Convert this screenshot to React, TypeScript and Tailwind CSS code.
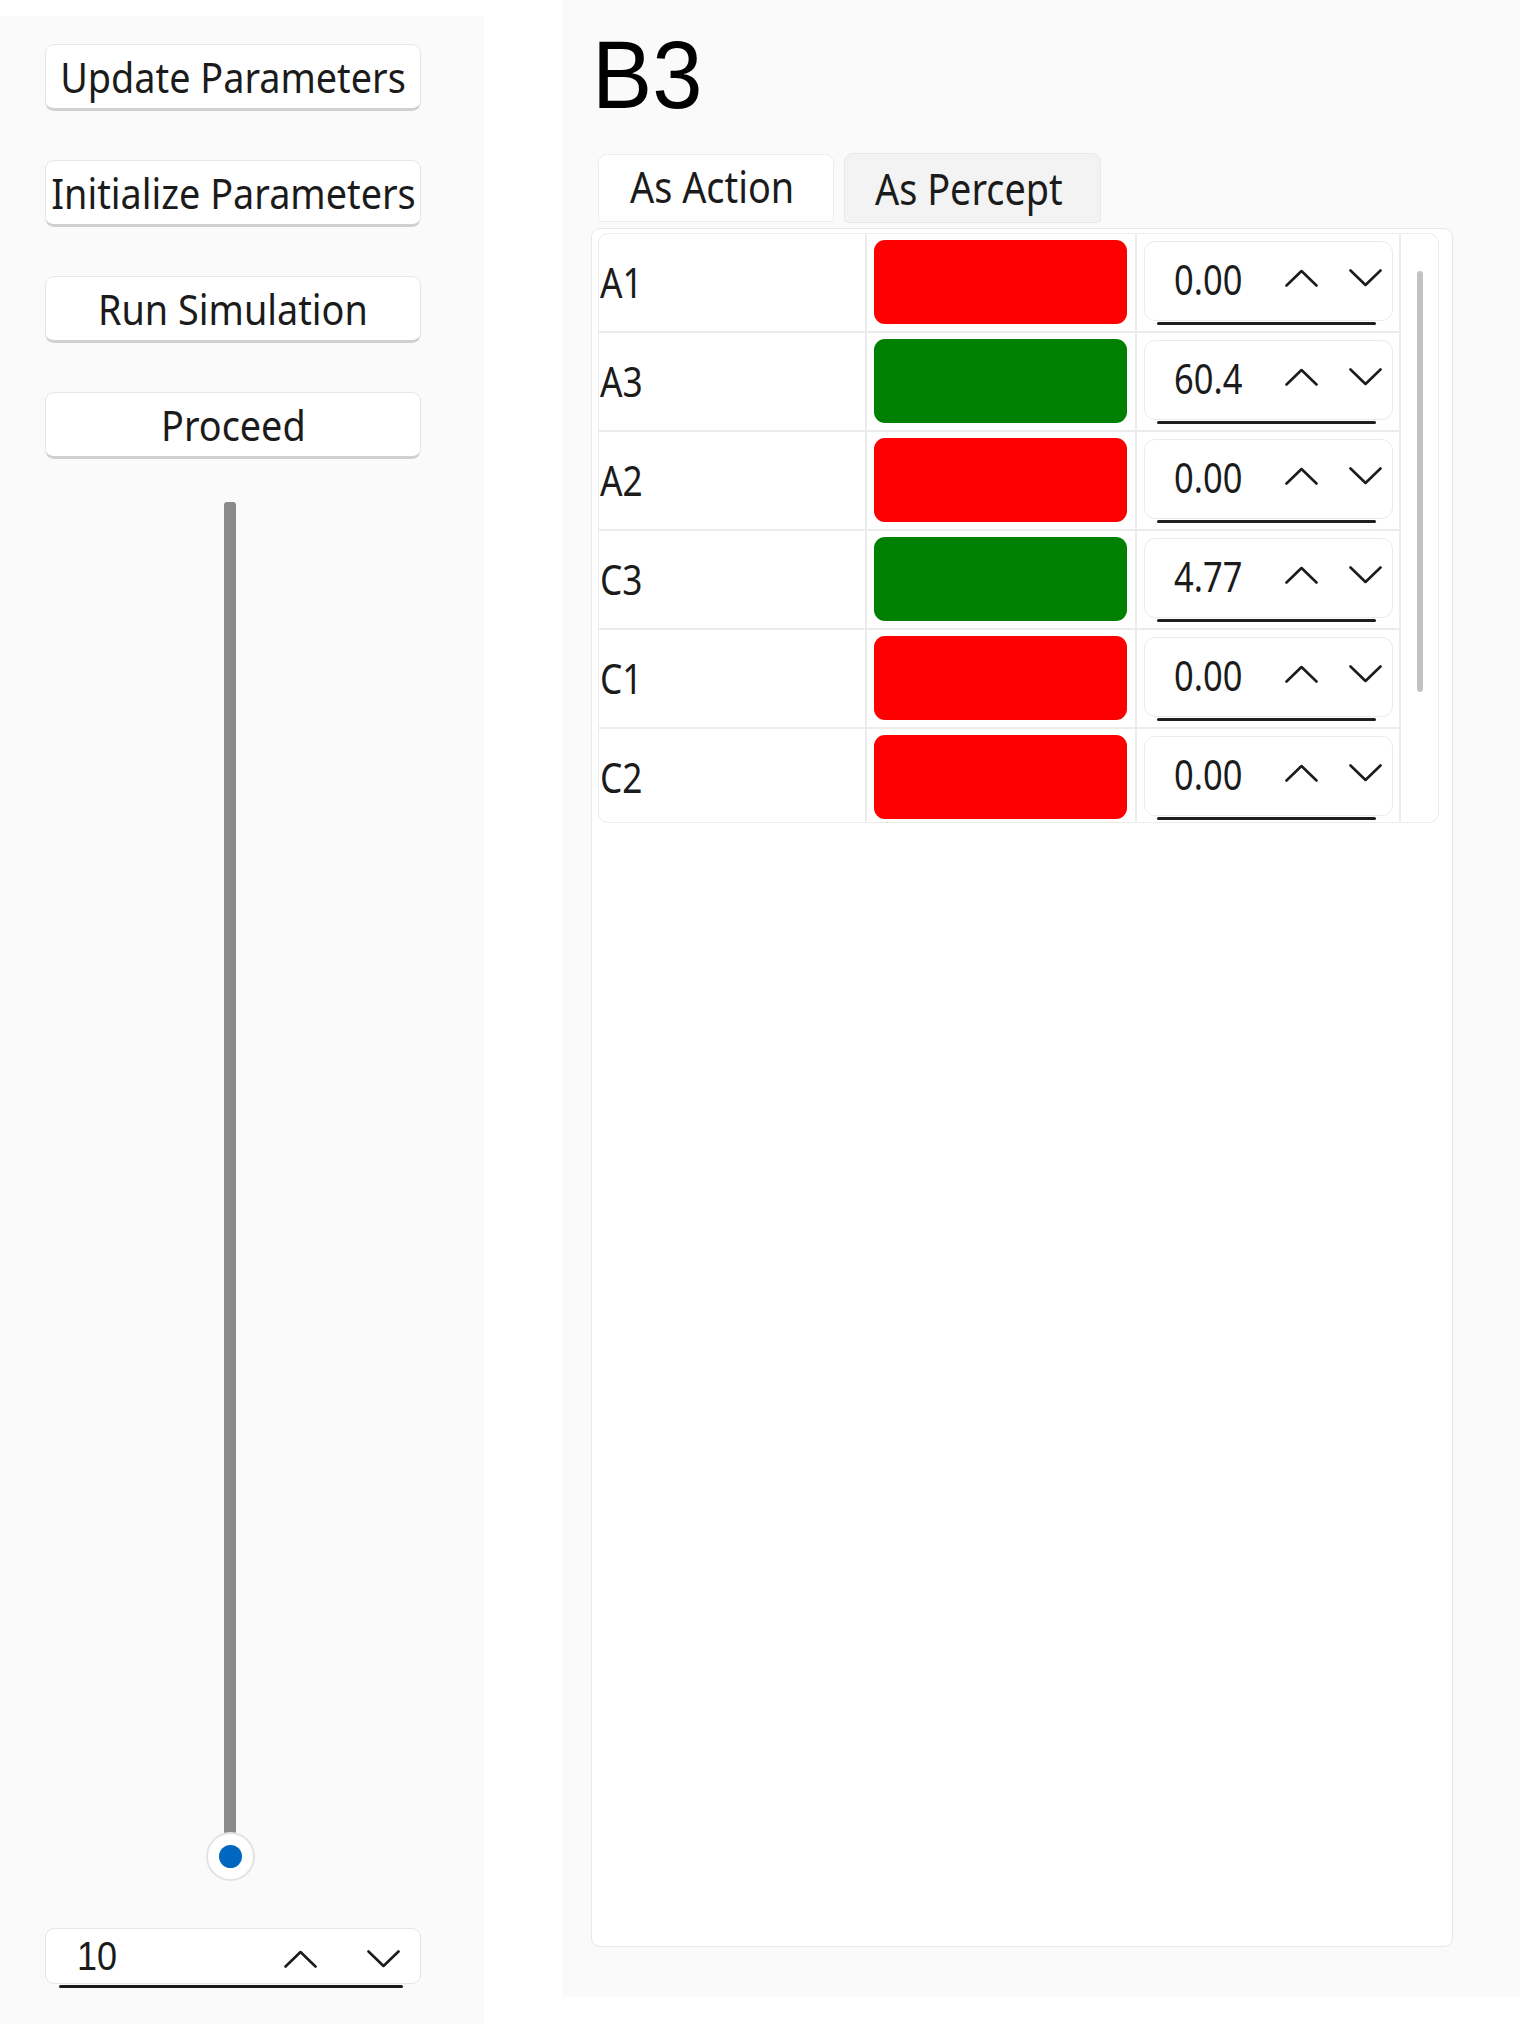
import React from "react";

const rows = [
  { name: "A1", on: false, value: "0.00" },
  { name: "A3", on: true, value: "60.4" },
  { name: "A2", on: false, value: "0.00" },
  { name: "C3", on: true, value: "4.77" },
  { name: "C1", on: false, value: "0.00" },
  { name: "C2", on: false, value: "0.00" },
];

const buttons = ["Update Parameters", "Initialize Parameters", "Run Simulation", "Proceed"];

const ChevronUp: React.FC = () => (
  <svg width="33" height="18" viewBox="0 0 33 18" fill="none">
    <polyline points="1.5,16.5 16.5,2 31.5,16.5" stroke="#1c1c1c" strokeWidth="2.6" strokeLinecap="round" strokeLinejoin="round" />
  </svg>
);

const ChevronDown: React.FC = () => (
  <svg width="33" height="18" viewBox="0 0 33 18" fill="none">
    <polyline points="1.5,1.5 16.5,16 31.5,1.5" stroke="#1c1c1c" strokeWidth="2.6" strokeLinecap="round" strokeLinejoin="round" />
  </svg>
);

const App: React.FC = () => {
  return (
    <div className="w-[1520px] h-[2024px] bg-white flex font-['Noto_Sans',sans-serif] text-[#1b1b1b] overflow-hidden">
      {/* Left control column */}
      <div className="mt-[16px] w-[484px] h-[2008px] bg-[#fafafa] flex flex-col px-[45px] pt-[28px]">
        <div className="flex flex-col gap-[49px] w-[376px]">
          {buttons.map((label) => (
            <button
              key={label}
              className="h-[67px] w-[376px] bg-white rounded-[9px] border border-[#e6e6e6] border-b-[3px] border-b-[#d0d0d0] flex items-center justify-center whitespace-nowrap"
            >
              <span className="inline-block text-[42px] leading-none scale-x-90">{label}</span>
            </button>
          ))}
        </div>

        {/* Vertical slider */}
        <div className="w-[376px] flex flex-col items-center mt-[43px] pr-[6px]">
          <div className="w-[12px] h-[1332px] bg-[#8a8a8a] rounded-t-[3px]" />
          <div className="-mt-[2px] w-[49px] h-[49px] rounded-full bg-white border-2 border-[#e3e3e3] flex items-center justify-center">
            <div className="w-[23px] h-[23px] rounded-full bg-[#0067c0]" />
          </div>
        </div>

        {/* Step spinbox */}
        <div className="mt-[47px] w-[376px] flex flex-col">
          <div className="h-[56px] w-[376px] bg-white rounded-[9px] border border-[#e6e6e6] flex items-center pl-[31px] pr-[20px]">
            <span className="text-[40px] leading-none font-['Liberation_Sans',sans-serif] scale-x-90 origin-left inline-block">10</span>
            <div className="ml-auto flex items-center gap-[50px] pt-[6px]">
              <ChevronUp />
              <ChevronDown />
            </div>
          </div>
          <div className="ml-[14px] mr-[18px] mt-[1px] h-[3px] bg-[#1a1a1a] rounded-full" />
        </div>
      </div>

      {/* Right node panel */}
      <div className="ml-[78px] w-[958px] h-[1997px] bg-[#fafafa] pl-[29px] pr-[67px] pt-[27px] flex flex-col">
        <h1 className="font-['Liberation_Sans',sans-serif] text-[96px] leading-none text-black scale-x-[0.94] origin-left inline-block pl-[1px]">
          B3
        </h1>

        {/* Tabs */}
        <div className="mt-[31px] pl-[7px] flex gap-[10px]">
          <div className="w-[236px] h-[68px] bg-white rounded-t-[9px] rounded-b-[4px] border border-[#ececec] flex items-center pl-[31px]">
            <span className="inline-block text-[43px] leading-none scale-x-[0.88] origin-left -mt-[4px]">As Action</span>
          </div>
          <div className="w-[257px] h-[70px] -mt-[1px] bg-[#f3f3f3] rounded-t-[9px] rounded-b-[4px] border border-[#e8e8e8] flex items-center pl-[30px]">
            <span className="inline-block text-[43px] leading-none scale-x-[0.88] origin-left">As Percept</span>
          </div>
        </div>

        {/* Tab content */}
        <div className="mt-[5px] h-[1719px] bg-white rounded-[9px] border border-[#e8e8e8] pl-[6px] pr-[13px] pt-[4px]">
          <div className="h-[590px] rounded-[10px] border border-[#ececec] flex overflow-hidden">
            <div className="w-[800px] flex flex-col">
              {rows.map((r) => (
                <div key={r.name} className="h-[99px] shrink-0 flex border-b-2 border-[#ececec]">
                  <div className="w-[268px] border-r-2 border-[#ececec] flex items-center pl-[1px]">
                    <span className="inline-block text-[42px] leading-none scale-x-[0.84] origin-left -mt-[2px]">{r.name}</span>
                  </div>
                  <div className="w-[270px] border-r-2 border-[#ececec] pl-[7px] pr-[8px] pt-[6px]">
                    <div className={`h-[84px] rounded-[11px] ${r.on ? "bg-[#008000]" : "bg-[#ff0000]"}`} />
                  </div>
                  <div className="flex-1 pl-[7px] pr-[6px] pt-[7px] flex flex-col">
                    <div className="h-[80px] bg-white rounded-[11px] border border-[#ebebeb] flex items-center pl-[29px] pr-[10px]">
                      <span className="inline-block text-[42px] leading-none scale-x-[0.82] origin-left -mt-[4px] w-[70px]">{r.value}</span>
                      <div className="ml-auto flex items-center gap-[31px] -mt-[6px]">
                        <ChevronUp />
                        <ChevronDown />
                      </div>
                    </div>
                    <div className="ml-[13px] mr-[17px] h-[3px] mt-[1px] bg-[#1f1f1f] rounded-full" />
                  </div>
                </div>
              ))}
            </div>
            {/* Scrollbar column */}
            <div className="flex-1 border-l-2 border-[#ececec] flex justify-center pt-[37px]">
              <div className="w-[6px] h-[421px] rounded-full bg-[#c2c2c2]" />
            </div>
          </div>
        </div>
      </div>
    </div>
  );
};

export default App;
